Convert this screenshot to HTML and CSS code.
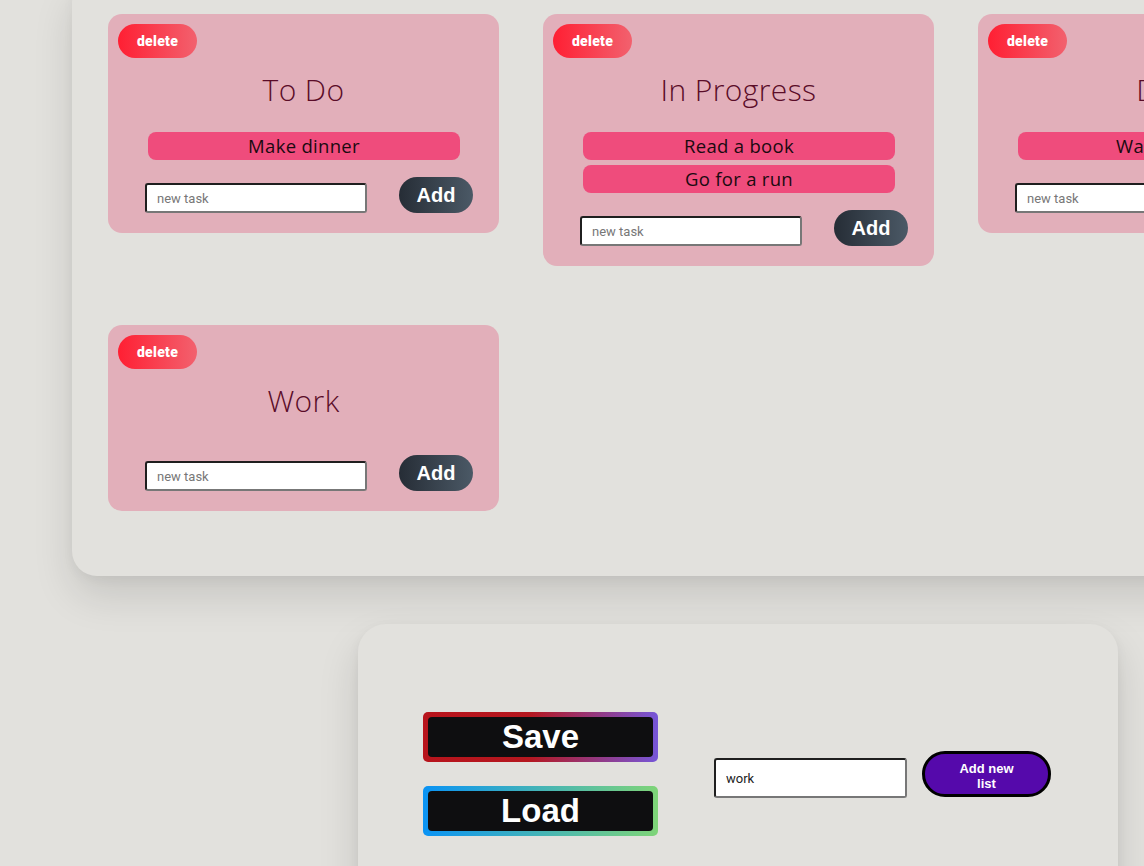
FILE: index.html
```html
<!DOCTYPE html>
<html lang="en">
<head>
<meta charset="utf-8">
<title>Lists</title>
<link rel="stylesheet" href="styles.css">
</head>
<body>
<main class="page">
  <section class="board">
    <div class="card">
      <button class="delete">delete</button>
      <h2 class="title">To Do</h2>
      <ul class="tasks"><li>Make dinner</li></ul>
      <div class="add-row"><input class="task-input" type="text" placeholder="new task"><button class="add">Add</button></div>
    </div>
    <div class="card">
      <button class="delete">delete</button>
      <h2 class="title">In Progress</h2>
      <ul class="tasks"><li>Read a book</li><li>Go for a run</li></ul>
      <div class="add-row"><input class="task-input" type="text" placeholder="new task"><button class="add">Add</button></div>
    </div>
    <div class="card">
      <button class="delete">delete</button>
      <h2 class="title">Done</h2>
      <ul class="tasks"><li>Walk the dog</li></ul>
      <div class="add-row"><input class="task-input" type="text" placeholder="new task"><button class="add">Add</button></div>
    </div>
    <div class="card">
      <button class="delete">delete</button>
      <h2 class="title">Work</h2>
      <ul class="tasks"></ul>
      <div class="add-row"><input class="task-input" type="text" placeholder="new task"><button class="add">Add</button></div>
    </div>
  </section>
  <section class="controls">
    <div class="save-load">
      <button class="grad-btn save"><span>Save</span></button>
      <button class="grad-btn load"><span>Load</span></button>
    </div>
    <div class="new-list">
      <input class="list-input" type="text" value="work">
      <button class="add-list">Add new<br>list</button>
    </div>
  </section>
</main>
</body>
</html>
```

FILE: styles.css
```css
html, body {
  margin: 0;
  padding: 0;
  overflow: hidden;
  background: #e2e1dd;
}
body {
  font-family: "Liberation Sans", Arial, sans-serif;
  width: 1144px;
  height: 866px;
}
.page {
  display: flex;
  flex-direction: column;
  align-items: flex-start;
}
.board {
  margin-top: -22px;
  margin-left: 72px;
  width: 1500px;
  box-sizing: border-box;
  padding: 36px 36px 65px;
  background: #e2e1dd;
  border-radius: 25px;
  box-shadow: 0 20px 40px rgba(0, 0, 0, 0.12), 0 4px 12px rgba(0, 0, 0, 0.04);
  display: grid;
  grid-template-columns: repeat(3, 391px);
  column-gap: 44px;
  row-gap: 59px;
  align-items: start;
}
.card {
  background: #e2afba;
  border-radius: 14px;
  padding: 10px 0 21px;
  display: flex;
  flex-direction: column;
}
.delete {
  align-self: flex-start;
  margin-left: 10px;
  width: 79px;
  height: 34px;
  border: none;
  border-radius: 17px;
  background: linear-gradient(90deg, #ff1f33, #f2616e);
  color: #fff;
  font-family: Roboto, "Open Sans", sans-serif;
  font-weight: 900;
  font-size: 14px;
  letter-spacing: 0.3px;
  padding: 0;
}
.title {
  margin: 14px 0 0;
  text-align: center;
  font-family: "Open Sans", Lato, sans-serif;
  font-weight: 300;
  font-size: 30px;
  letter-spacing: 0.4px;
  line-height: 36px;
  color: #5a0c28;
}
.tasks {
  list-style: none;
  margin: 24px 0 12px 40px;
  padding: 0;
  width: 312px;
  display: flex;
  flex-direction: column;
  gap: 5px;
}
.tasks li {
  height: 28px;
  line-height: 28px;
  background: #ef4c7c;
  border-radius: 8px;
  text-align: center;
  font-family: "Open Sans", Lato, sans-serif;
  font-size: 18.5px;
  letter-spacing: 0.3px;
  color: #1a0a10;
}
.tasks li:last-child {
  margin-bottom: 5px;
}
.add-row {
  display: flex;
  align-items: flex-end;
  padding-left: 37px;
  margin-bottom: -1px;
}
.task-input {
  width: 222px;
  height: 30px;
  box-sizing: border-box;
  border: 2px solid;
  border-color: #1f1f1f #777 #777 #1f1f1f;
  border-radius: 3px;
  background: #fff;
  padding: 0 10px;
  font-family: Roboto, sans-serif;
  font-size: 13px;
  outline: none;
}
.task-input::placeholder {
  color: #777;
}
.add {
  margin-left: 32px;
  width: 74px;
  height: 36px;
  border: none;
  border-radius: 18px;
  background: linear-gradient(90deg, #262d36, #4b5966);
  color: #fff;
  font-family: "Liberation Sans", Arial, sans-serif;
  font-weight: 700;
  font-size: 20px;
  padding: 0;
}
.controls {
  margin-top: 48px;
  margin-left: 358px;
  width: 760px;
  height: 320px;
  box-sizing: border-box;
  padding: 88px 0 0 65px;
  background: #e2e1dd;
  border-radius: 28px;
  box-shadow: 0 20px 40px rgba(0, 0, 0, 0.13), 0 4px 12px rgba(0, 0, 0, 0.05);
  display: flex;
  align-items: flex-start;
}
.save-load {
  display: flex;
  flex-direction: column;
  gap: 24px;
}
.grad-btn {
  width: 235px;
  height: 50px;
  padding: 5px;
  border: none;
  border-radius: 5px;
  box-sizing: border-box;
  display: flex;
}
.grad-btn span {
  flex: 1;
  background: #0e0e10;
  border-radius: 4px;
  color: #fff;
  font-family: "Liberation Sans", Arial, sans-serif;
  font-weight: 700;
  font-size: 33px;
  line-height: 40px;
  text-align: center;
}
.save {
  background: linear-gradient(90deg, #b7141c 0%, #b5171f 45%, #7656d8 100%);
}
.load {
  background: linear-gradient(90deg, #0a93f4, #7fd478);
}
.new-list {
  display: flex;
  align-items: flex-end;
  margin-left: 56px;
  margin-top: 39px;
}
.list-input {
  width: 193px;
  height: 40px;
  margin-bottom: -1px;
  box-sizing: border-box;
  border: 2px solid;
  border-color: #1f1f1f #777 #777 #1f1f1f;
  border-radius: 3px;
  background: #fff;
  padding: 0 10px;
  font-family: Roboto, sans-serif;
  font-size: 13px;
  color: #222;
  outline: none;
}
.add-list {
  margin-left: 15px;
  width: 129px;
  height: 46px;
  border: 3px solid #000;
  border-radius: 23px;
  background: #5509ab;
  color: #fff;
  font-family: "Liberation Sans", Arial, sans-serif;
  font-weight: 700;
  font-size: 13px;
  line-height: 15px;
  padding: 3px 0 0;
}
```
